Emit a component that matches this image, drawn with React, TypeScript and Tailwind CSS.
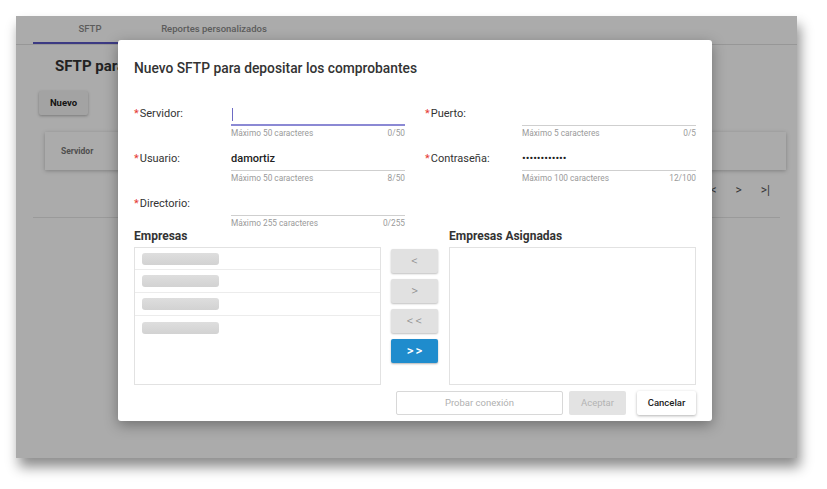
import React from "react";

function Field({
  label,
  value,
  max,
  count,
  focused,
  password,
}: {
  label: string;
  value?: string;
  max: number;
  count: string;
  focused?: boolean;
  password?: boolean;
}) {
  return (
    <div className="flex h-[34px]">
      <div className="w-[97px] h-[21px] flex items-center text-[11px] text-[#333]">
        <span className="text-[#e53935] mr-[1px]">*</span>
        {label}
      </div>
      <div className="flex-1 flex flex-col">
        <div
          className={
            focused
              ? "box-border h-[22px] flex items-center border-b-2 border-[#8b89d4]"
              : "box-border h-[22px] flex items-center border-b border-[#cfcfcf]"
          }
        >
          {focused && <div className="w-[1px] h-[13px] bg-[#6d6bc4] ml-[1px]" />}
          {value && (
            <span
              className={
                password
                  ? "text-[11px] text-[#222]"
                  : "text-[11px] font-medium text-[#222]"
              }
            >
              {value}
            </span>
          )}
        </div>
        <div className="mt-[2px] h-[10px] flex justify-between text-[8.3px] leading-[10px] text-[#9a9a9a]">
          <span>Máximo {max} caracteres</span>
          <span>{count}</span>
        </div>
      </div>
    </div>
  );
}

function Pill({ w }: { w: number }) {
  return (
    <div
      className="h-[12px] rounded-[3px] bg-gradient-to-b from-[#dedede] to-[#d2d2d2] blur-[0.6px]"
      style={{ width: w }}
    />
  );
}

function MoveBtn({ children, active }: { children: React.ReactNode; active?: boolean }) {
  return (
    <div
      className={
        active
          ? "h-[24px] rounded-[2px] bg-[#1f8ccd] text-white text-[13px] font-medium flex items-center justify-center shadow-[0_1px_2px_rgba(0,0,0,0.3)] tracking-[2px] pl-[2px]"
          : "h-[24px] rounded-[2px] bg-[#e1e1e1] text-[#8d8d8d] text-[13px] font-light flex items-center justify-center shadow-[0_1px_2px_rgba(0,0,0,0.25)] tracking-[2px] pl-[2px]"
      }
    >
      {children}
    </div>
  );
}

export default function App() {
  return (
    <div className="w-[827px] h-[489px] bg-white overflow-hidden font-[Roboto,Arial,sans-serif] pt-[16px] pl-[16px]">
      <div className="relative w-[781px] h-[442px] bg-white shadow-[3px_9px_12px_rgba(0,0,0,0.45)]">
        {/* background page */}
        <div className="flex flex-col h-full">
          <div className="flex h-[28px] pl-[17px] border-b border-[#e2e2e2] box-content">
            <div className="w-[114px] flex items-center justify-center text-[9.5px] font-medium text-[#8a8a8a] border-b-2 border-[#5a57c4] box-border">
              SFTP
            </div>
            <div className="w-[134px] flex items-center justify-center text-[9.5px] font-medium text-[#8a8a8a] pb-[2px]">
              Reportes personalizados
            </div>
          </div>
          <div className="mt-[11px] pl-[39px] h-[20px] flex items-center text-[15px] font-bold text-[#333]">
            SFTP para
          </div>
          <div className="mt-[15px] ml-[23px] w-[49px] h-[24px] rounded-[2px] bg-[#f4f4f4] shadow-[0_1px_3px_rgba(0,0,0,0.3)] flex items-center justify-center text-[9.5px] font-bold text-[#222]">
            Nuevo
          </div>
          <div className="mt-[17px] ml-[29px] w-[741px] h-[38px] bg-white shadow-[0_1px_4px_rgba(0,0,0,0.25)] flex items-center pl-[16px] text-[8.5px] font-bold text-[#777]">
            Servidor
          </div>
          <div className="mt-[12px] h-[16px] flex items-center justify-end pr-[27px] gap-[19px] text-[12px] text-[#555]">
            <span>|&lt;</span>
            <span>&lt;</span>
            <span>&gt;</span>
            <span>&gt;|</span>
          </div>
          <div className="mt-[19px] mx-[17px] border-b border-[#e6e6e6]" />
        </div>

        {/* overlay */}
        <div className="absolute inset-0 bg-black/[0.33]" />

        {/* dialog */}
        <div className="absolute left-[102px] top-[24px] w-[594px] h-[381px] bg-white rounded-[3px] shadow-[0_4px_14px_rgba(0,0,0,0.35)] px-[16px] pt-[18px] flex flex-col">
          <div className="h-[20px] flex items-center text-[13.8px] font-medium text-[#333]">
            Nuevo SFTP para depositar los comprobantes
          </div>
          <div className="mt-[26px] grid grid-cols-2 gap-x-[20px] gap-y-[11px]">
            <Field label="Servidor:" max={50} count="0/50" focused />
            <Field label="Puerto:" max={5} count="0/5" />
            <Field label="Usuario:" value="damortiz" max={50} count="8/50" />
            <Field label="Contraseña:" value="••••••••••••" max={100} count="12/100" password />
            <Field label="Directorio:" max={255} count="0/255" />
          </div>
          <div className="mt-[1px] flex gap-[10px]">
            <div className="w-[247px] flex flex-col">
              <div className="h-[14px] flex items-center text-[12px] font-bold text-[#333]">Empresas</div>
              <div className="mt-[4px] h-[138px] border border-[#e2e2e2] flex flex-col">
                <div className="h-[22px] border-b border-[#ececec] flex items-center pl-[7px]">
                  <Pill w={77} />
                </div>
                <div className="h-[23px] border-b border-[#ececec] flex items-center pl-[7px]">
                  <Pill w={77} />
                </div>
                <div className="h-[23px] border-b border-[#ececec] flex items-center pl-[7px]">
                  <Pill w={77} />
                </div>
                <div className="h-[23px] flex items-center pl-[7px]">
                  <Pill w={77} />
                </div>
              </div>
            </div>
            <div className="w-[47px] pt-[20px] flex flex-col gap-[6px]">
              <MoveBtn>&lt;</MoveBtn>
              <MoveBtn>&gt;</MoveBtn>
              <MoveBtn>&lt;&lt;</MoveBtn>
              <MoveBtn active>&gt;&gt;</MoveBtn>
            </div>
            <div className="ml-[1px] w-[247px] flex flex-col">
              <div className="h-[14px] flex items-center text-[12px] font-bold text-[#333]">Empresas Asignadas</div>
              <div className="mt-[4px] h-[138px] border border-[#e2e2e2]" />
            </div>
          </div>
          <div className="mt-[6px] flex justify-end items-center">
            <div className="w-[167px] h-[24px] border border-[#d8d8d8] rounded-[2px] flex items-center justify-center text-[9.5px] text-[#b0b0b0]">
              Probar conexión
            </div>
            <div className="ml-[6px] w-[57px] h-[24px] bg-[#e3e3e3] rounded-[2px] flex items-center justify-center text-[9.5px] text-[#b3b3b3]">
              Aceptar
            </div>
            <div className="ml-[11px] w-[59px] h-[24px] bg-white rounded-[2px] shadow-[0_1px_3px_rgba(0,0,0,0.3)] flex items-center justify-center text-[9.5px] font-medium text-[#222]">
              Cancelar
            </div>
          </div>
        </div>
      </div>
    </div>
  );
}
